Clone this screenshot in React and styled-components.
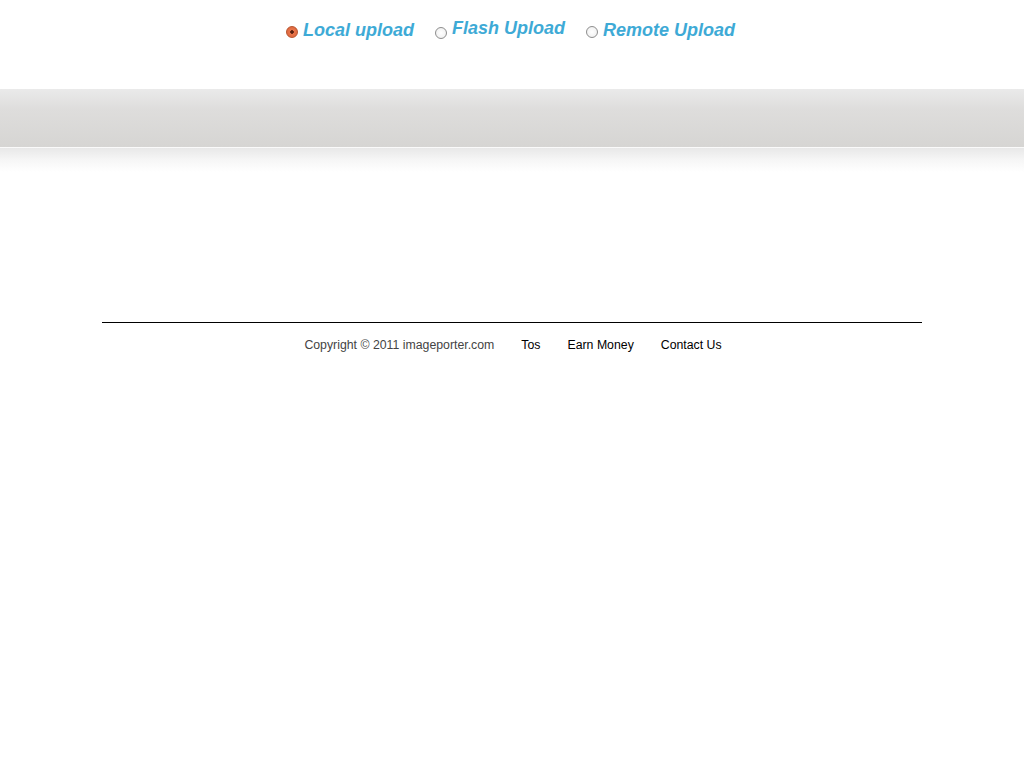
import React, { useState } from 'react'
import styled, { createGlobalStyle } from 'styled-components'

const GlobalStyle = createGlobalStyle`
    html, body {
        margin: 0;
        padding: 0;
        background: #fff;
        font-family: "Liberation Sans", Arial, sans-serif;
    }
`

const Page = styled.div`
    width: 100%;
    min-height: 768px;
    background: #fff;
`

const UploadTabs = styled.div`
    height: 89px;
    display: flex;
    justify-content: center;
    align-items: flex-start;
    padding-top: 18px;
    box-sizing: border-box;
    gap: 21px;
    padding-right: 3px;
`

const Tab = styled.label`
    display: flex;
    align-items: center;
    gap: 5px;
    cursor: pointer;
    margin-top: ${props => props.$offset || 0}px;
`

const Radio = styled.span`
    width: 12px;
    height: 12px;
    border-radius: 50%;
    box-sizing: border-box;
    flex-shrink: 0;
    margin-top: ${props => props.$drop || 0}px;
    border: 1px solid ${props => (props.$checked ? '#b8532c' : '#8e8e8e')};
    background: ${props =>
        props.$checked
            ? 'radial-gradient(circle, #5a2010 0 1.5px, #e9764a 2px, #d8603a 100%)'
            : 'radial-gradient(circle, #fff 0, #f4f4f4 60%, #e2e2e2 100%)'};
`

const TabLabel = styled.span`
    font-family: "Liberation Sans", Arial, sans-serif;
    font-size: 18px;
    font-weight: bold;
    font-style: italic;
    color: #3eaad6;
`

const Bar = styled.div`
    height: 58px;
    background: linear-gradient(to bottom, #eaeaea 0%, #dedddc 35%, #d6d5d3 100%);
    border-bottom: 1px solid #fafafa;
`

const BarShadow = styled.div`
    height: 24px;
    background: linear-gradient(to bottom, #e8e8e8 0%, #f6f6f6 50%, #fff 100%);
`

const Content = styled.div`
    height: 150px;
`

const Footer = styled.footer`
    width: 820px;
    margin: 0 auto;
    border-top: 1px solid #000;
    display: flex;
    justify-content: center;
    gap: 27px;
    padding-top: 15px;
    font-size: 12.3px;
    padding-left: 2px;
    box-sizing: border-box;
`

const Copyright = styled.span`
    color: #444;
`

const FooterLink = styled.a`
    color: #000;
    text-decoration: none;
`

const tabs = [
    { id: 'local', label: 'Local upload', offset: 2, drop: 3 },
    { id: 'flash', label: 'Flash Upload', offset: 0, drop: 8 },
    { id: 'remote', label: 'Remote Upload', offset: 2, drop: 3 },
]

export default function App() {
    const [active, setActive] = useState('local')
    return (
        <Page>
            <GlobalStyle />
            <UploadTabs>
                {tabs.map(t => (
                    <Tab key={t.id} $offset={t.offset} onClick={() => setActive(t.id)}>
                        <Radio $checked={active === t.id} $drop={t.drop} />
                        <TabLabel>{t.label}</TabLabel>
                    </Tab>
                ))}
            </UploadTabs>
            <Bar />
            <BarShadow />
            <Content />
            <Footer>
                <Copyright>Copyright © 2011 imageporter.com</Copyright>
                <FooterLink href="#">Tos</FooterLink>
                <FooterLink href="#">Earn Money</FooterLink>
                <FooterLink href="#">Contact Us</FooterLink>
            </Footer>
        </Page>
    )
}
